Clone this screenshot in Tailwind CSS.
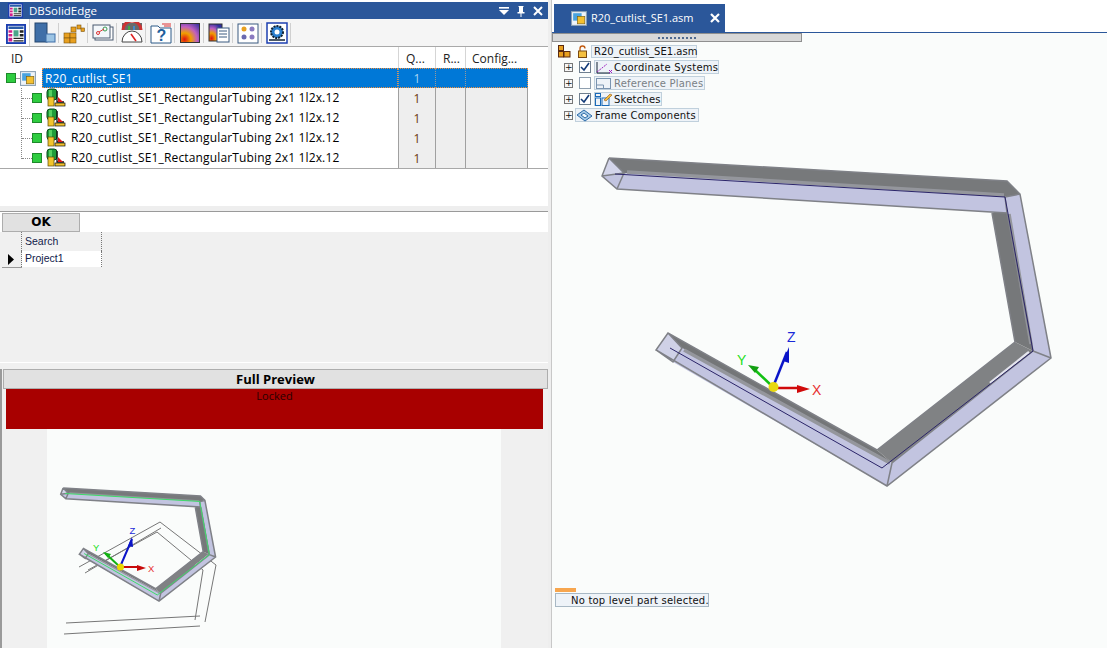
<!DOCTYPE html>
<html lang="en">
<head>
  <meta charset="UTF-8" />
  <title>DBSolidEdge</title>
  <script src="https://cdn.jsdelivr.net/npm/@tailwindcss/browser@4"></script>
</head>
<body class="bg-white font-['Open_Sans',sans-serif] text-black overflow-hidden">

  <!-- shared icons and the frame model -->
  <svg class="hidden" width="0" height="0">
    <defs>
      <symbol id="appicon" viewBox="0 0 16 16">
        <rect x="0.75" y="0.75" width="14.5" height="14.5" fill="#fff" stroke="#1c3fb0" stroke-width="1.5"/>
        <rect x="2" y="2" width="12" height="2" fill="#2a5ca8"/>
        <rect x="2" y="5" width="3" height="2" fill="#d0208a"/><rect x="2" y="8" width="3" height="2" fill="#d0208a"/><rect x="2" y="11" width="3" height="3" fill="#d0208a"/>
        <rect x="6" y="5" width="4" height="5" fill="#4aa58a"/><rect x="11" y="5" width="3" height="2" fill="#222"/>
        <rect x="11" y="8" width="3" height="2" fill="#222"/><rect x="6" y="11" width="8" height="1" fill="#222"/><rect x="6" y="13" width="8" height="1" fill="#222"/>
      </symbol>
      <symbol id="part" viewBox="0 0 20 20">
        <rect x="1" y="1" width="10" height="11" rx="3" fill="#1f9d3a" stroke="#0b4a1a"/>
        <rect x="3" y="2" width="3" height="8" fill="#55d060"/>
        <rect x="2" y="9" width="6" height="9" fill="#f2c42c" stroke="#5a4a08" stroke-width="0.7"/>
        <path d="M11 3v11h7" fill="none" stroke="#111" stroke-width="1.3"/>
        <path d="M12 9l5 5h-5z" fill="#e01818"/>
        <rect x="9" y="15" width="10" height="3" fill="#f2c42c" stroke="#111" stroke-width="0.7"/>
      </symbol>
      <symbol id="asm" viewBox="0 0 16 16">
        <rect x="0.5" y="1.5" width="14" height="13" fill="#eef4fa" stroke="#8aa0b4"/>
        <rect x="2" y="3" width="8" height="7" fill="#4aa3df"/>
        <rect x="6" y="6" width="7" height="7" fill="#f4c030" stroke="#7a6010" stroke-width="0.6"/>
      </symbol>
      <g id="model">
        <polygon points="609,158 1007,181 1020,194 1005,197 624,173" fill="#77797b"/>
        <polygon points="624,173 1005,197 1007,213 617,189" fill="#c2c4e0"/>
        <polygon points="609,158 602,176 617,189 624,173" fill="#d3d5ea"/>
        <polygon points="602,176 624,173 617,189" fill="#c2c4e0"/>
        <polygon points="992,213 1007,213 1033,351 1015,342" fill="#76787a"/>
        <polygon points="1005,197 1020,194 1051,358 1033,351" fill="#c2c4e0"/>
        <polygon points="1015,342 1033,351 892,463 877,450" fill="#808284"/>
        <polygon points="1033,351 1051,358 887,486 892,463" fill="#c2c4e0"/>
        <polygon points="668,333 682,348 892,463 877,450" fill="#747678"/>
        <polygon points="682,348 892,463 887,486 673,362" fill="#c2c4e0"/>
        <polygon points="668,333 656,350 673,362 682,348" fill="#cfd1e6"/>
        <path d="M627 172L1004 195M1009 214L1031 344M684 350L890 463" fill="none" stroke="#94969c" stroke-width="3.5"/>
        <path d="M1029 352L990 383" fill="none" stroke="#e4e5ee" stroke-width="2.5"/>
        <path d="M609 158L1007 181L1020 194L1051 358L887 486L656 350L668 333L877 450M609 158L602 176L617 189L1007 213L1033 351L892 463L887 486M602 176L624 173L609 158M624 173L617 189M1005 197L1007 213M1005 197L1020 194M1033 351L1051 358M668 333L682 348L673 362L656 350M992 213L1015 342L877 450" fill="none" stroke="#7f8187" stroke-width="1.5" vector-effect="non-scaling-stroke"/>
        <path d="M615 174L1005 197L1033 351L882 468L670 348" fill="none" stroke="currentColor" stroke-width="1" vector-effect="non-scaling-stroke"/>
      </g>
    </defs>
  </svg>

  <div class="flex w-[1107px] h-[648px] overflow-hidden">

    <!-- left docked panel -->
    <div class="w-[548px] h-full flex flex-col shrink-0">
      <div class="h-[2px] bg-white"></div>
      <div class="h-[17px] bg-[#2b579a] flex items-center text-white text-[11.5px] pl-[8px]">
        <svg class="w-[15px] h-[15px] mr-[6px]"><use href="#appicon"/></svg>
        <span>DBSolidEdge</span>
        <div class="ml-auto flex items-center gap-[5px] pr-[4px]">
          <svg width="12" height="12" viewBox="0 0 12 12" fill="#fff"><rect x="1" y="2" width="10" height="1.6"/><path d="M1 5h10l-5 5z"/></svg>
          <svg width="12" height="12" viewBox="0 0 12 12" fill="#fff"><path d="M3.5 1h5v1H8v5h1.5v1.4h-3V12h-1V8.4h-3V7H4V2h-.5z"/></svg>
          <svg width="12" height="12" viewBox="0 0 12 12" stroke="#fff" stroke-width="2"><path d="M2 2l8 8M10 2l-8 8"/></svg>
        </div>
      </div>

      <!-- toolbar -->
      <div class="h-[28px] flex shrink-0 border-b border-[#a9a9a9]">
        <div class="w-[29px] flex items-center justify-center pt-[2px] pl-[3px]">
          <svg class="w-[20px] h-[20px]"><use href="#appicon"/></svg>
        </div>
        <div class="flex-1 bg-[#f5f5f5] border-l border-[#cfcfcf] flex items-center pl-[4px]">
          <svg width="22" height="22" viewBox="0 0 22 22"><rect x="1" y="1" width="12" height="19" fill="#3f6fa8" stroke="#24466e"/><rect x="12" y="12" width="9" height="8" fill="#9cc4e4" stroke="#3f6fa8"/></svg>
          <div class="w-px h-[20px] bg-[#d0d0d0] ml-[2px] mr-[4px]"></div>
          <svg width="22" height="22" viewBox="0 0 22 22"><g fill="#e8a020" stroke="#7a5410" stroke-width="0.6"><rect x="1" y="11" width="6" height="5"/><rect x="7" y="11" width="6" height="5"/><rect x="1" y="16" width="6" height="5"/><rect x="7" y="16" width="6" height="5"/><rect x="8" y="5" width="5" height="5"/><rect x="14" y="3" width="4" height="4"/><rect x="18" y="6" width="3.5" height="3.5"/></g></svg>
          <div class="w-px h-[20px] bg-[#d0d0d0] ml-[2px] mr-[4px]"></div>
          <svg width="22" height="22" viewBox="0 0 22 22" fill="none"><rect x="3" y="5" width="18" height="13" fill="#fff" stroke="#4a5a70"/><rect x="1" y="3" width="17" height="13" fill="#f3f7fb" stroke="#4a5a70"/><circle cx="6" cy="11" r="1.5" stroke="#d33"/><circle cx="13" cy="7" r="2" stroke="#3a9a50"/><path d="M7 10l5-3" stroke="#d33"/></svg>
          <div class="w-px h-[20px] bg-[#d0d0d0] ml-[2px] mr-[4px]"></div>
          <svg width="22" height="22" viewBox="0 0 22 22" fill="none"><rect x="1" y="1" width="20" height="7" fill="#6a6a6a"/><path d="M2 8a9 9 0 0 1 18 0" stroke="#c33" stroke-width="3"/><path d="M8 4v4" stroke="#4a4" stroke-width="2"/><path d="M13 4v4" stroke="#48c" stroke-width="2"/><path d="M1 20a10 11 0 0 1 20 0z" fill="#fff" stroke="#444"/><path d="M10 12l5 7" stroke="#d22" stroke-width="1.6"/></svg>
          <div class="w-px h-[20px] bg-[#d0d0d0] ml-[2px] mr-[4px]"></div>
          <svg width="22" height="22" viewBox="0 0 22 22" fill="none"><path d="M1 4h7l2 2h11v15H1z" fill="#fff" stroke="#2c5a88"/><path d="M12 2h9M14 4h7" stroke="#d33"/><text x="6.500" y="19" font-size="16" font-weight="700" fill="#1f5f9c" font-family="'Liberation Sans',sans-serif">?</text></svg>
          <div class="w-px h-[20px] bg-[#d0d0d0] ml-[2px] mr-[4px]"></div>
          <div class="w-[20px] h-[20px] border border-[#333] bg-[radial-gradient(circle_at_20%_85%,#e01010_0,#f0a000_30%,#c060c0_60%,#3030a0_100%)] mx-[1px]"></div>
          <div class="w-px h-[20px] bg-[#d0d0d0] ml-[2px] mr-[4px]"></div>
          <svg width="22" height="22" viewBox="0 0 22 22"><defs><radialGradient id="heat" cx="20%" cy="85%" r="90%"><stop offset="0" stop-color="#e01010"/><stop offset=".35" stop-color="#f0a000"/><stop offset=".65" stop-color="#c060c0"/><stop offset="1" stop-color="#3030a0"/></radialGradient></defs><rect x="1" y="2" width="13" height="17" fill="url(#heat)" stroke="#333"/><rect x="9" y="6" width="12" height="14" fill="#fff" stroke="#3a5a80"/><path d="M11 9h8M11 12h8M11 15h8" stroke="#3a5a80"/></svg>
          <div class="w-px h-[20px] bg-[#d0d0d0] ml-[2px] mr-[4px]"></div>
          <svg width="22" height="22" viewBox="0 0 22 22"><rect x="1" y="2" width="20" height="19" fill="#fff" stroke="#3a5a80"/><circle cx="7" cy="7" r="2.500" fill="#e8a020"/><circle cx="15" cy="7" r="2.500" fill="#8a7ac0"/><circle cx="7" cy="15" r="2.500" fill="#6a6ab0"/><circle cx="15" cy="15" r="2.500" fill="#8a7ac0"/></svg>
          <div class="w-px h-[20px] bg-[#d0d0d0] ml-[2px] mr-[4px]"></div>
          <svg width="22" height="22" viewBox="0 0 22 22"><rect x="1" y="1" width="20" height="20" fill="#fff" stroke="#1c3fb0" stroke-width="1.500"/><circle cx="11" cy="10" r="6" fill="#2a7fd0" stroke="#123" stroke-dasharray="2 1" stroke-width="2"/><circle cx="11" cy="10" r="2.500" fill="#fff"/><path d="M3 18h16" stroke="#123" stroke-width="1.500"/></svg>
          <div class="w-px h-[20px] bg-[#d0d0d0] ml-[2px]"></div>
        </div>
      </div>

      <!-- parts table -->
      <div class="h-[21px] flex text-[12px] text-[#222] shrink-0">
        <div class="w-[398px] pl-[11px] leading-[23px]">ID</div>
        <div class="w-[37px] pl-[7px] leading-[23px] border-l border-[#d5d5d5]">Q...</div>
        <div class="w-[30px] pl-[7px] leading-[23px] border-l border-[#d5d5d5]">R...</div>
        <div class="w-[63px] pl-[6px] leading-[23px] border-l border-[#d5d5d5]">Config...</div>
      </div>
      <div class="relative text-[12px] leading-[22px] tracking-[.155px] shrink-0">
        <div class="absolute left-[21px] top-[20px] h-[71px] w-px border-l border-dotted border-[#888]"></div>
        <div class="flex h-[20px]">
          <div class="w-[42px] flex items-center pl-[6px] shrink-0">
            <div class="w-[10px] h-[10px] bg-[#2ecc40] border border-[#1d8a2a]"></div>
            <div class="w-[4px] h-px bg-[#999]"></div>
            <svg class="w-[17px] h-[17px]"><use href="#asm"/></svg>
          </div>
          <div class="w-[356px] bg-[#0078d7] text-white pl-[2px] leading-[20px] border border-dotted border-[#f09040]">R20_cutlist_SE1</div>
          <div class="w-[37px] bg-[#0078d7] text-[#a8d4f4] text-center leading-[20px] border-y border-l border-dotted border-y-[#f09040] border-l-[#999]">1</div>
          <div class="w-[30px] bg-[#0078d7] border-y border-l border-dotted border-y-[#f09040] border-l-[#999]"></div>
          <div class="w-[63px] bg-[#0078d7] border border-dotted border-y-[#f09040] border-l-[#999] border-r-[#f09040]"></div>
        </div>
        <div class="flex h-[20px]">
          <div class="w-[398px] flex items-center pl-[22px]">
            <div class="w-[10px] h-px border-t border-dotted border-[#888]"></div>
            <div class="w-[10px] h-[10px] bg-[#2ecc40] border border-[#1d8a2a]"></div>
            <svg class="w-[20px] h-[20px] ml-[4px] mr-[5px]"><use href="#part"/></svg>
            <span>R20_cutlist_SE1_RectangularTubing 2x1 1l2x.12</span>
          </div>
          <div class="w-[37px] bg-[#eeeeee] text-[#6a3a10] text-center border-l border-[#a0a0a0]">1</div>
          <div class="w-[30px] bg-[#eeeeee] border-l border-[#a0a0a0]"></div>
          <div class="w-[63px] bg-[#eeeeee] border-x border-[#a0a0a0]"></div>
        </div>
        <div class="flex h-[20px]">
          <div class="w-[398px] flex items-center pl-[22px]">
            <div class="w-[10px] h-px border-t border-dotted border-[#888]"></div>
            <div class="w-[10px] h-[10px] bg-[#2ecc40] border border-[#1d8a2a]"></div>
            <svg class="w-[20px] h-[20px] ml-[4px] mr-[5px]"><use href="#part"/></svg>
            <span>R20_cutlist_SE1_RectangularTubing 2x1 1l2x.12</span>
          </div>
          <div class="w-[37px] bg-[#eeeeee] text-[#6a3a10] text-center border-l border-[#a0a0a0]">1</div>
          <div class="w-[30px] bg-[#eeeeee] border-l border-[#a0a0a0]"></div>
          <div class="w-[63px] bg-[#eeeeee] border-x border-[#a0a0a0]"></div>
        </div>
        <div class="flex h-[20px]">
          <div class="w-[398px] flex items-center pl-[22px]">
            <div class="w-[10px] h-px border-t border-dotted border-[#888]"></div>
            <div class="w-[10px] h-[10px] bg-[#2ecc40] border border-[#1d8a2a]"></div>
            <svg class="w-[20px] h-[20px] ml-[4px] mr-[5px]"><use href="#part"/></svg>
            <span>R20_cutlist_SE1_RectangularTubing 2x1 1l2x.12</span>
          </div>
          <div class="w-[37px] bg-[#eeeeee] text-[#6a3a10] text-center border-l border-[#a0a0a0]">1</div>
          <div class="w-[30px] bg-[#eeeeee] border-l border-[#a0a0a0]"></div>
          <div class="w-[63px] bg-[#eeeeee] border-x border-[#a0a0a0]"></div>
        </div>
        <div class="flex h-[20px]">
          <div class="w-[398px] flex items-center pl-[22px]">
            <div class="w-[10px] h-px border-t border-dotted border-[#888]"></div>
            <div class="w-[10px] h-[10px] bg-[#2ecc40] border border-[#1d8a2a]"></div>
            <svg class="w-[20px] h-[20px] ml-[4px] mr-[5px]"><use href="#part"/></svg>
            <span>R20_cutlist_SE1_RectangularTubing 2x1 1l2x.12</span>
          </div>
          <div class="w-[37px] bg-[#eeeeee] text-[#6a3a10] text-center border-l border-[#a0a0a0]">1</div>
          <div class="w-[30px] bg-[#eeeeee] border-l border-[#a0a0a0]"></div>
          <div class="w-[63px] bg-[#eeeeee] border-x border-[#a0a0a0]"></div>
        </div>
      </div>
      <div class="h-[38px] bg-white border-t border-[#a8a8a8] shrink-0"></div>
      <div class="h-[5px] bg-[#eeeeee] shrink-0"></div>
      <div class="h-[1px] bg-[#9a9a9a] shrink-0"></div>

      <!-- search grid -->
      <div class="h-[20px] flex items-end pl-[2px] shrink-0">
        <div class="w-[78px] h-[19px] bg-[#e1e1e1] border border-[#adadad] text-center text-[12px] leading-[17px] font-bold font-['DejaVu_Sans',sans-serif]">OK</div>
      </div>
      <div class="h-[131px] bg-[#f0f0f0] border-b border-white shrink-0 font-['Liberation_Sans',sans-serif] text-[10.5px] text-[#10204a]">
        <div class="flex h-[19px]">
          <div class="w-[22px] border-r border-dotted border-[#777]"></div>
          <div class="w-[80px] pl-[3px] leading-[18px] border-r border-dotted border-[#777]">Search</div>
        </div>
        <div class="flex h-[16px]">
          <div class="w-[22px] border-r border-dotted border-[#777] border-b-0 flex items-center justify-center">
            <svg width="8" height="11" viewBox="0 0 8 11"><path d="M1 0l6 5.500L1 11z" fill="#000"/></svg>
          </div>
          <div class="w-[80px] pl-[3px] leading-[15px] bg-white border-r border-dotted border-[#777]">Project1</div>
        </div>
        <div class="ml-[2px] w-[20px] h-px bg-[#999]"></div>
      </div>
      <div class="h-[6px] bg-[#f0f0f0] shrink-0"></div>

      <!-- preview -->
      <div class="flex-1 bg-[#f0f0f0] border-l-2 border-[#9a9a9a] flex flex-col min-h-0">
        <div class="h-[20px] ml-[1px] bg-[#e1e1e1] border border-[#adadad] text-center text-[13px] leading-[18px] font-bold shrink-0">Full Preview</div>
        <div class="h-[40px] ml-[4px] mr-[5px] bg-[#a80000] text-center text-[11px] leading-[13px] text-[#2a0000] shrink-0">Locked</div>
        <div class="flex-1 ml-[45px] mr-[47px] bg-[#fafcfb] overflow-hidden">
          <svg width="454" height="219" viewBox="47 429 454 219" class="text-[#3ddc6a]">
            <path d="M79 567L160 522L216 565L205 622M85 573L161 528M88 570L157 532L203 570L195 620M66 623L200 616M64 634L200 626" fill="none" stroke="#777" stroke-width="1"/>
            <g transform="translate(-147 433.5) scale(.345)"><use href="#model"/></g>
            <path d="M120 567L132 539" stroke="#0a14c8" stroke-width="2"/><path d="M132 537l-4 9 5 1z" fill="#0a14c8"/>
            <path d="M120 567L105 553" stroke="#12b012" stroke-width="2"/><path d="M103 552l8 2-3 4z" fill="#12b012"/>
            <path d="M120 567H140" stroke="#c80a0a" stroke-width="2"/><path d="M146 568l-9-3v6z" fill="#c80a0a"/>
            <circle cx="120.500" cy="567" r="3.500" fill="#e8d800"/>
            <g font-family="'Liberation Sans',sans-serif" font-size="9.500">
              <text x="129.500" y="534" fill="#1a2ad8">Z</text>
              <text x="93" y="551" fill="#22e022">Y</text>
              <text x="148" y="572" fill="#e83030">X</text>
            </g>
          </svg>
        </div>
      </div>
    </div>

    <!-- sash -->
    <div class="w-[3px] h-full bg-[#eeeeee] shrink-0"></div>
    <div class="w-px h-full bg-[#c8c8c8] shrink-0"></div>

    <!-- model view -->
    <div class="relative flex-1 bg-[#fafcfb] flex flex-col">
      <svg class="absolute left-0 top-0 text-[#2a2468]" width="555" height="648" viewBox="552 0 555 648">
        <use href="#model"/>
        <path d="M773 387L787 352" stroke="#0a14c8" stroke-width="2.500"/><path d="M789 347l-6 14 6 2z" fill="#0a14c8"/>
        <path d="M773 387L754 369" stroke="#12c012" stroke-width="2.500"/><path d="M748 365l11 2-4 6z" fill="#12a012"/>
        <path d="M773 388H798" stroke="#d00a0a" stroke-width="2.500"/><path d="M810 389l-13-4v8z" fill="#d00a0a"/>
        <circle cx="773.500" cy="387" r="5" fill="#e8d810"/>
        <g font-family="'Liberation Sans',sans-serif" font-size="14">
          <text x="787" y="342" fill="#1a2ad8">Z</text>
          <text x="737" y="365" fill="#22e022">Y</text>
          <text x="812" y="395" fill="#e83030">X</text>
        </g>
      </svg>

      <div class="relative h-[33px] bg-white border-b border-[#2b579a] shrink-0 flex items-end pl-[2px]">
        <div class="w-[171px] h-[28px] bg-[#2b579a] text-white text-[11px] flex items-center pl-[17px]">
          <svg class="w-[17px] h-[17px] mr-[3px]"><use href="#asm"/></svg>
          <span>R20_cutlist_SE1.asm</span>
          <svg class="ml-auto mr-[4px]" width="12" height="12" viewBox="0 0 12 12" stroke="#fff" stroke-width="2.200"><path d="M2 2l8 8M10 2l-8 8"/></svg>
        </div>
      </div>
      <div class="relative w-[250px] h-[9px] bg-[#d8d8d8] border border-[#8f8f8f] shrink-0 flex items-center justify-center">
        <div class="w-[38px] h-[2px] border-t-2 border-dotted border-[#4f6a90]"></div>
      </div>

      <!-- pathfinder tree -->
      <div class="relative text-[10px] leading-[14px] tracking-[.2px] whitespace-nowrap mt-[3px] font-['DejaVu_Sans',sans-serif] text-[#111] shrink-0">
        <div class="flex items-center h-[13px] pl-[6px]">
          <svg width="13" height="13" viewBox="0 0 13 13"><g fill="#e8a020" stroke="#5a2a10"><rect x=".5" y=".5" width="5" height="5"/><rect x=".5" y="6.500" width="5" height="5.500"/><rect x="6" y="6.500" width="6" height="5.500"/></g></svg>
          <svg class="ml-[5px]" width="13" height="13" viewBox="0 0 13 13"><path d="M4 6V3.500a2.500 2.500 0 0 1 5 0" fill="none" stroke="#c05a10" stroke-width="1.300"/><rect x="2.500" y="6" width="8" height="6.500" fill="#f4c040" stroke="#7a4a10"/></svg>
          <span class="ml-[2px] h-[13px] leading-[11px] pl-[2px] bg-[#eef3f8] border border-[#c0d0dc] tracking-[0px] w-[106px]">R20_cutlist_SE1.asm</span>
        </div>
        <div class="flex items-center h-[16px] mt-px pl-[12px]">
          <span class="w-[9px] h-[9px] border border-[#777] bg-[#f6f6f6] text-[9px] leading-[7px] text-center tracking-normal">+</span>
          <span class="w-[12px] h-[12px] ml-[6px] border border-[#6f7f8f] bg-white flex items-center justify-center">
            <svg width="10" height="10" viewBox="0 0 10 10"><path d="M1 5l3 3 5-7" fill="none" stroke="#123a78" stroke-width="1.600"/></svg>
          </span>
          <span class="ml-[3px] w-[125px] h-[14px] flex items-center bg-[#eef3f8] border border-[#c0d0dc]">
            <svg class="shrink-0" width="18" height="13" viewBox="0 0 18 13" fill="none"><path d="M2 1v11h13" stroke="#123" stroke-width="1"/><path d="M2 11L12 3" stroke="#a020c0" stroke-dasharray="2 1"/><path d="M14 9l3 3M17 9l-3 3" stroke="#a020c0"/></svg>
            <span class="ml-px pt-px">Coordinate Systems</span>
          </span>
        </div>
        <div class="flex items-center h-[16px] pl-[12px]">
          <span class="w-[9px] h-[9px] border border-[#777] bg-[#f6f6f6] text-[9px] leading-[7px] text-center tracking-normal">+</span>
          <span class="w-[12px] h-[12px] ml-[6px] border border-[#8f9faf] bg-white"></span>
          <span class="ml-[3px] w-[111px] h-[14px] flex items-center bg-[#eef3f8] border border-[#c0d0dc] text-[#7a7f85]">
            <svg class="shrink-0" width="18" height="13" viewBox="0 0 18 13" fill="none"><rect x="1.500" y="1.500" width="14" height="10" stroke="#7a94b0"/><path d="M1.500 8h7v3.500" stroke="#7a94b0"/></svg>
            <span class="ml-px pt-px">Reference Planes</span>
          </span>
        </div>
        <div class="flex items-center h-[16px] pl-[12px]">
          <span class="w-[9px] h-[9px] border border-[#777] bg-[#f6f6f6] text-[9px] leading-[7px] text-center tracking-normal">+</span>
          <span class="w-[12px] h-[12px] ml-[6px] border border-[#6f7f8f] bg-white flex items-center justify-center">
            <svg width="10" height="10" viewBox="0 0 10 10"><path d="M1 5l3 3 5-7" fill="none" stroke="#123a78" stroke-width="1.600"/></svg>
          </span>
          <span class="ml-[3px] w-[68px] h-[14px] flex items-center bg-[#eef3f8] border border-[#c0d0dc]">
            <svg class="shrink-0" width="18" height="13" viewBox="0 0 18 13" fill="none"><rect x=".5" y="5" width="5" height="7.500" stroke="#1a6ab8"/><rect x="7" y="5" width="7" height="7.500" stroke="#1a6ab8"/><rect x=".5" y=".5" width="5" height="3" stroke="#1a6ab8"/><path d="M9 7l6-6 2 1-6 6z" fill="#f0c040" stroke="#9a5010" stroke-width=".6"/></svg>
            <span class="ml-px pt-px">Sketches</span>
          </span>
        </div>
        <div class="flex items-center h-[16px] pl-[12px]">
          <span class="w-[9px] h-[9px] border border-[#777] bg-[#f6f6f6] text-[9px] leading-[7px] text-center tracking-normal">+</span>
          <span class="ml-[2px] w-[124px] h-[14px] flex items-center bg-[#eef3f8] border border-[#c0d0dc]">
            <svg class="shrink-0" width="18" height="13" viewBox="0 0 18 13" fill="none"><path d="M1 6l7-5 8 6-7 5z" fill="#a9cbe8" stroke="#2a6aa8"/><path d="M5 6l3-2 4 3-3 2z" fill="#f6fafc" stroke="#2a6aa8"/></svg>
            <span class="ml-px pt-px">Frame Components</span>
          </span>
        </div>
      </div>

      <!-- status -->
      <div class="relative mt-[465px] ml-[3px] w-[21px] h-[4px] bg-[#f7a64f] shrink-0"></div>
      <div class="relative ml-[3px] mt-px w-[154px] h-[14px] bg-[#eef3f8] border border-[#a8b8c4] pl-[15px] text-[10px] leading-[13px] tracking-[.2px] whitespace-nowrap font-['DejaVu_Sans',sans-serif] text-[#111] shrink-0">No top level part selected.</div>
    </div>
  </div>
</body>
</html>
